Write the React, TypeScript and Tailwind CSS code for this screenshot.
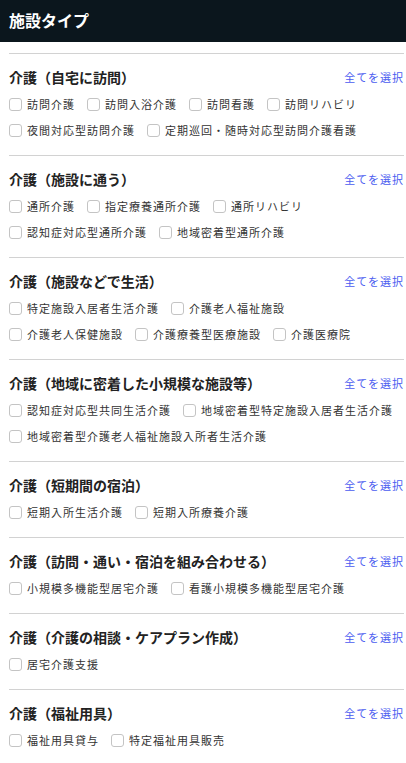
import React from "react";

const sections: { title: string; items: string[] }[] = [
  {
    title: "介護（自宅に訪問）",
    items: ["訪問介護", "訪問入浴介護", "訪問看護", "訪問リハビリ", "夜間対応型訪問介護", "定期巡回・随時対応型訪問介護看護"],
  },
  {
    title: "介護（施設に通う）",
    items: ["通所介護", "指定療養通所介護", "通所リハビリ", "認知症対応型通所介護", "地域密着型通所介護"],
  },
  {
    title: "介護（施設などで生活）",
    items: ["特定施設入居者生活介護", "介護老人福祉施設", "介護老人保健施設", "介護療養型医療施設", "介護医療院"],
  },
  {
    title: "介護（地域に密着した小規模な施設等）",
    items: ["認知症対応型共同生活介護", "地域密着型特定施設入居者生活介護", "地域密着型介護老人福祉施設入所者生活介護"],
  },
  {
    title: "介護（短期間の宿泊）",
    items: ["短期入所生活介護", "短期入所療養介護"],
  },
  {
    title: "介護（訪問・通い・宿泊を組み合わせる）",
    items: ["小規模多機能型居宅介護", "看護小規模多機能型居宅介護"],
  },
  {
    title: "介護（介護の相談・ケアプラン作成）",
    items: ["居宅介護支援"],
  },
  {
    title: "介護（福祉用具）",
    items: ["福祉用具貸与", "特定福祉用具販売"],
  },
];

function CheckItem({ label }: { label: string }) {
  return (
    <label className="flex h-[26px] items-center gap-[5px]">
      <span className="h-[13px] w-[13px] shrink-0 rounded-[3px] border border-[#c4c4c4] bg-white" />
      <span className="text-[11px] tracking-[1px] text-[#333] leading-none whitespace-nowrap">{label}</span>
    </label>
  );
}

export default function App() {
  return (
    <div className="min-h-screen w-[406px] bg-white font-['Noto_Sans_CJK_JP','Noto_Sans',sans-serif]">
      {/* Header */}
      <div className="flex h-[42px] items-center bg-[#0b161d] px-[9px] pb-[3px]">
        <h1 className="text-[16px] font-bold text-white leading-none">施設タイプ</h1>
      </div>

      <div className="pl-[9px] pr-[2px] pt-[11px]">
        {sections.map((s) => (
          <section key={s.title} className="border-t border-[#d2d2d2] pt-[13px] pb-[12px]">
            <div className="flex h-[20px] items-center justify-between">
              <h2 className="text-[14px] font-bold text-[#222] leading-none">{s.title}</h2>
              <button className="text-[11px] tracking-[1px] text-[#4a5cf0] leading-none">全てを選択</button>
            </div>
            <div className="mt-[4px] flex flex-wrap gap-x-[12px]">
              {s.items.map((it) => (
                <CheckItem key={it} label={it} />
              ))}
            </div>
          </section>
        ))}
      </div>
    </div>
  );
}
